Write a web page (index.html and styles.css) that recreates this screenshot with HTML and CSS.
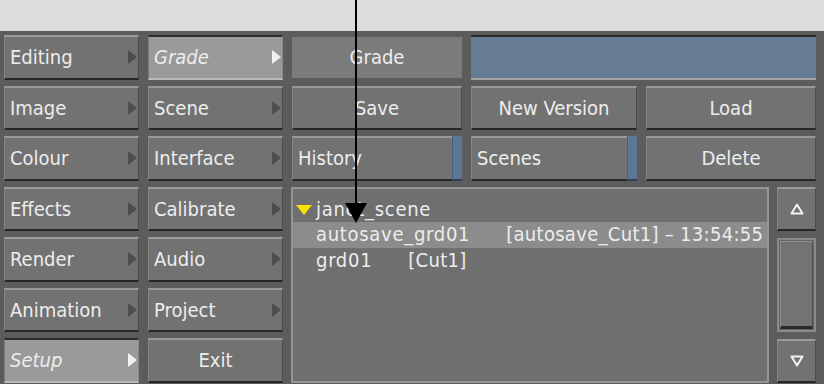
FILE: index.html
```html
<!DOCTYPE html>
<html lang="en">
  <head>
    <meta charset="UTF-8" />
    <meta name="viewport" content="width=device-width, initial-scale=1.0" />
    <title>Grade Setup</title>
    <link rel="stylesheet" href="styles.css">
  </head>
  <body>
    <!-- Light strip above the panel -->
    <div class="topbar"></div>

    <!-- Main control panel -->
    <div class="panel">
      <div class="menu">
        <!-- Row 1 -->
        <div class="btn sub">Editing<span class="tri"></span></div>
        <div class="btn sub on">Grade<span class="tri"></span></div>
        <div class="label">Grade</div>
        <div class="name-field"></div>

        <!-- Row 2 -->
        <div class="btn sub">Image<span class="tri"></span></div>
        <div class="btn sub">Scene<span class="tri"></span></div>
        <div class="btn center">Save</div>
        <div class="btn center">New Version</div>
        <div class="btn center">Load</div>

        <!-- Row 3 -->
        <div class="btn sub">Colour<span class="tri"></span></div>
        <div class="btn sub">Interface<span class="tri"></span></div>
        <div class="btn toggle">History<span class="strip"></span></div>
        <div class="btn toggle">Scenes<span class="strip"></span></div>
        <div class="btn center">Delete</div>

        <!-- Scene browser -->
        <div class="browser">
          <div class="list">
            <div class="row folder"><span class="open"></span><span class="name">janet_scene</span></div>
            <div class="row picked"><span class="name">autosave_grd01</span><span class="info">[autosave_Cut1] – 13:54:55</span></div>
            <div class="row"><span class="name">grd01</span><span class="info">[Cut1]</span></div>
          </div>
          <div class="scroll">
            <div class="btn arrow">
              <svg width="14" height="12" viewBox="0 0 14 12"><path d="M7 1.5 L12.5 10.5 L1.5 10.5 Z" fill="none" stroke="#f2f2f2" stroke-width="2" stroke-linejoin="round"/></svg>
            </div>
            <div class="track"><div class="thumb"></div></div>
            <div class="btn arrow">
              <svg width="14" height="12" viewBox="0 0 14 12"><path d="M1.5 1.5 L12.5 1.5 L7 10.5 Z" fill="none" stroke="#f2f2f2" stroke-width="2" stroke-linejoin="round"/></svg>
            </div>
          </div>
        </div>

        <!-- Rows 4 to 7, left columns -->
        <div class="btn sub">Effects<span class="tri"></span></div>
        <div class="btn sub">Calibrate<span class="tri"></span></div>
        <div class="btn sub">Render<span class="tri"></span></div>
        <div class="btn sub">Audio<span class="tri"></span></div>
        <div class="btn sub">Animation<span class="tri"></span></div>
        <div class="btn sub">Project<span class="tri"></span></div>
        <div class="btn sub on">Setup<span class="tri"></span></div>
        <div class="btn center">Exit</div>
      </div>
    </div>

    <!-- Callout arrow drawn over the panel -->
    <div class="pointer">
      <div class="shaft"></div>
      <svg class="head" width="22" height="20" viewBox="0 0 22 20"><path d="M0 0 L22 0 L11 20 Z" fill="#000"/></svg>
    </div>
  </body>
</html>
```

FILE: styles.css
```css
/* General styles */
body {
    margin: 0;
    padding: 0;
    width: 824px;
    height: 384px;
    overflow: hidden;
    background: #5c5c5c;
    font-family: "DejaVu Sans Condensed", "DejaVu Sans", sans-serif;
    font-size: 20px;
    color: #ededed;
    position: relative;
}

.topbar {
    height: 31px;
    background: #dcdcdc;
}

.panel {
    height: 353px;
    padding: 4px 0 0 4px;
    box-sizing: border-box;
    background: #5c5c5c;
}

/* Button grid: 5 columns, 7 rows */
.menu {
    display: grid;
    grid-template-columns: 135px 135px 170px 166px 170px;
    grid-template-rows: repeat(7, 44.5px);
    column-gap: 9px;
    row-gap: 6px;
}

/* Raised buttons */
.btn {
    position: relative;
    display: flex;
    align-items: center;
    box-sizing: border-box;
    padding: 0 5px;
    background: #727272;
    border-top: 2px solid #9a9a9a;
    border-left: 1px solid #858585;
    border-right: 1px solid #4d4d4d;
    border-bottom: 2px solid #272727;
    white-space: nowrap;
}

.btn.center {
    justify-content: center;
}

/* Pressed / current menu entries */
.btn.on {
    background: #9a9a9a;
    border-top-color: #2c2c2c;
    border-left-color: #7a7a7a;
    border-right-color: #8a8a8a;
    border-bottom-color: #b9b9b9;
    font-style: italic;
}

/* Submenu triangle */
.tri {
    position: absolute;
    right: 1px;
    top: 50%;
    margin-top: -7px;
    width: 0;
    height: 0;
    border-top: 7px solid transparent;
    border-bottom: 7px solid transparent;
    border-left: 9px solid #4d4d4d;
}

.btn.on .tri {
    border-left-color: #f0f0f0;
}

/* Toggle buttons with blue strip */
.strip {
    position: absolute;
    right: -1px;
    top: -2px;
    bottom: -2px;
    width: 10px;
    background: #5d7596;
    border-left: 1px solid #4a5f7c;
    border-bottom: 2px solid #2f3f57;
    box-sizing: border-box;
}

/* Flat label field */
.label {
    display: flex;
    align-items: center;
    justify-content: center;
    margin: 2px 0;
    background: #7b7b7b;
}

/* Name entry field */
.name-field {
    grid-column: 4 / 6;
    box-sizing: border-box;
    background: #667c95;
    border-top: 2px solid #2a2a2a;
    border-bottom: 2px solid #a4a4a4;
}

/* Scene browser */
.browser {
    grid-column: 3 / 6;
    grid-row: 4 / 8;
    display: flex;
    gap: 8px;
    margin-left: -1px;
}

.list {
    flex: 1;
    background: #6f6f6f;
    border: 2px solid #959595;
    padding-top: 8px;
    letter-spacing: 0.3px;
}

.row {
    height: 25.5px;
    line-height: 25.5px;
    padding-left: 23px;
    white-space: nowrap;
}

.row .name {
    letter-spacing: 0.7px;
}

.row .info {
    margin-left: 36px;
}

.row.picked {
    background: #8c8c8c;
}

.folder {
    position: relative;
}

.open {
    position: absolute;
    left: 3px;
    top: 8px;
    width: 0;
    height: 0;
    border-left: 8px solid transparent;
    border-right: 8px solid transparent;
    border-top: 10px solid #f5e400;
}

/* Scroll column */
.scroll {
    width: 39px;
    display: flex;
    flex-direction: column;
    gap: 7px;
}

.arrow {
    height: 44px;
    justify-content: center;
    padding: 0;
}

.track {
    flex: 1;
    border: 2px solid #8a8a8a;
    padding: 1px;
    background: #666;
}

.thumb {
    height: 100%;
    box-sizing: border-box;
    background: #737373;
    border-top: 1px solid #8e8e8e;
    border-left: 1px solid #8e8e8e;
    border-bottom: 3px solid #2a2a2a;
    border-right: 1px solid #4d4d4d;
}

/* Callout arrow */
.pointer {
    position: absolute;
    left: 345px;
    top: 0;
    width: 22px;
}

.shaft {
    width: 2px;
    height: 204px;
    margin-left: 10px;
    background: #000;
}

.head {
    display: block;
    margin-top: -1px;
}
```
